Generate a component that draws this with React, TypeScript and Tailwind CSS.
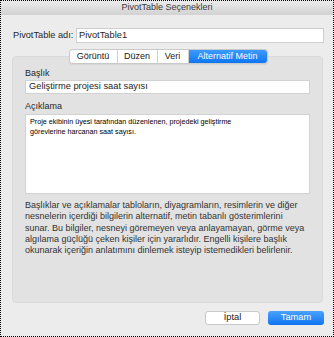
const font = { fontFamily: '"Liberation Sans", Arial, sans-serif' }

function Tab({ label, width, active, first, last }: { label: string; width: string; active?: boolean; first?: boolean; last?: boolean }) {
  return (
    <div
      className={
        'flex h-full items-center justify-center text-[9px] leading-none ' +
        width +
        (active
          ? ' bg-gradient-to-b from-[#3a9afc] to-[#0b76f2] text-white'
          : ' bg-white text-[#222] border-r border-[#d0d0d0]') +
        (first ? ' rounded-l-[3px]' : '') +
        (last ? ' rounded-r-[3px]' : '')
      }
    >
      {label}
    </div>
  )
}

export default function App() {
  return (
    <div
      className="w-[334px] h-[337px] border border-dotted border-black bg-[#ececec] flex flex-col text-[#262626]"
      style={font}
    >
      {/* title bar */}
      <div className="h-[14px] bg-gradient-to-b from-[#ebebeb] to-[#d2d2d2] flex items-center justify-center text-[9px] text-[#3a3a3a]">
        PivotTable Seçenekleri
      </div>

      {/* name row */}
      <div className="mt-[13px] flex items-center pl-[12px] pr-[9px]">
        <span className="text-[9.2px] w-[63px]">PivotTable adı:</span>
        <div className="flex-1 h-[15px] bg-white border border-[#cfcfcf] flex items-center pl-[2px] text-[9.3px]">
          PivotTable1
        </div>
      </div>

      {/* tabs */}
      <div className="relative z-10 mt-[6px] flex justify-center pl-[2px]">
        <div className="flex h-[15px] rounded-[3px] border border-[#c9c9c9] shadow-[0_1px_0_rgba(0,0,0,0.05)]">
          <Tab label="Görüntü" width="w-[48px]" first />
          <Tab label="Düzen" width="w-[40px]" />
          <Tab label="Veri" width="w-[31px]" />
          <Tab label="Alternatif Metin" width="w-[78px]" active last />
        </div>
      </div>

      {/* group box */}
      <div className="mt-[-8px] ml-[11px] mr-[10px] h-[247px] rounded-[4px] bg-[#e2e2e2] border border-[#dadada] px-[12px] pt-[11px] flex flex-col">
        <div className="text-[9px] leading-[10px]">Başlık</div>
        <div className="mt-[2px] h-[14px] bg-white border border-[#d2d2d2] flex items-center pl-[3px] text-[9.3px]">
          Geliştirme projesi saat sayısı
        </div>
        <div className="mt-[7px] text-[9px] leading-[10px]">Açıklama</div>
        <div className="mt-[3px] h-[80px] bg-white border border-[#d2d2d2] pl-[4px] pt-[2px] text-[7.2px] leading-[10px] text-black">
          Proje ekibinin üyesi tarafından düzenlenen, projedeki geliştirme
          <br />
          görevlerine harcanan saat sayısı.
        </div>
        <p className="mt-[6px] text-[9px] leading-[11.3px] text-[#333] whitespace-nowrap">
          Başlıklar ve açıklamalar tabloların, diyagramların, resimlerin ve diğer
          <br />
          nesnelerin içerdiği bilgilerin alternatif, metin tabanlı gösterimlerini
          <br />
          sunar. Bu bilgiler, nesneyi göremeyen veya anlayamayan, görme veya
          <br />
          algılama güçlüğü çeken kişiler için yararlıdır. Engelli kişilere başlık
          <br />
          okunarak içeriğin anlatımını dinlemek isteyip istemedikleri belirlenir.
        </p>
      </div>

      {/* buttons */}
      <div className="mt-[8px] flex justify-end gap-[8px] pr-[9px]">
        <button className="w-[55px] h-[14px] bg-white border border-[#c8c8c8] rounded-[3px] text-[9.3px] leading-none text-[#222] flex items-center justify-center">
          İptal
        </button>
        <button className="w-[56px] h-[14px] bg-gradient-to-b from-[#49a2fd] to-[#0b74f1] rounded-[3px] text-[9.3px] leading-none text-white flex items-center justify-center">
          Tamam
        </button>
      </div>
    </div>
  )
}
